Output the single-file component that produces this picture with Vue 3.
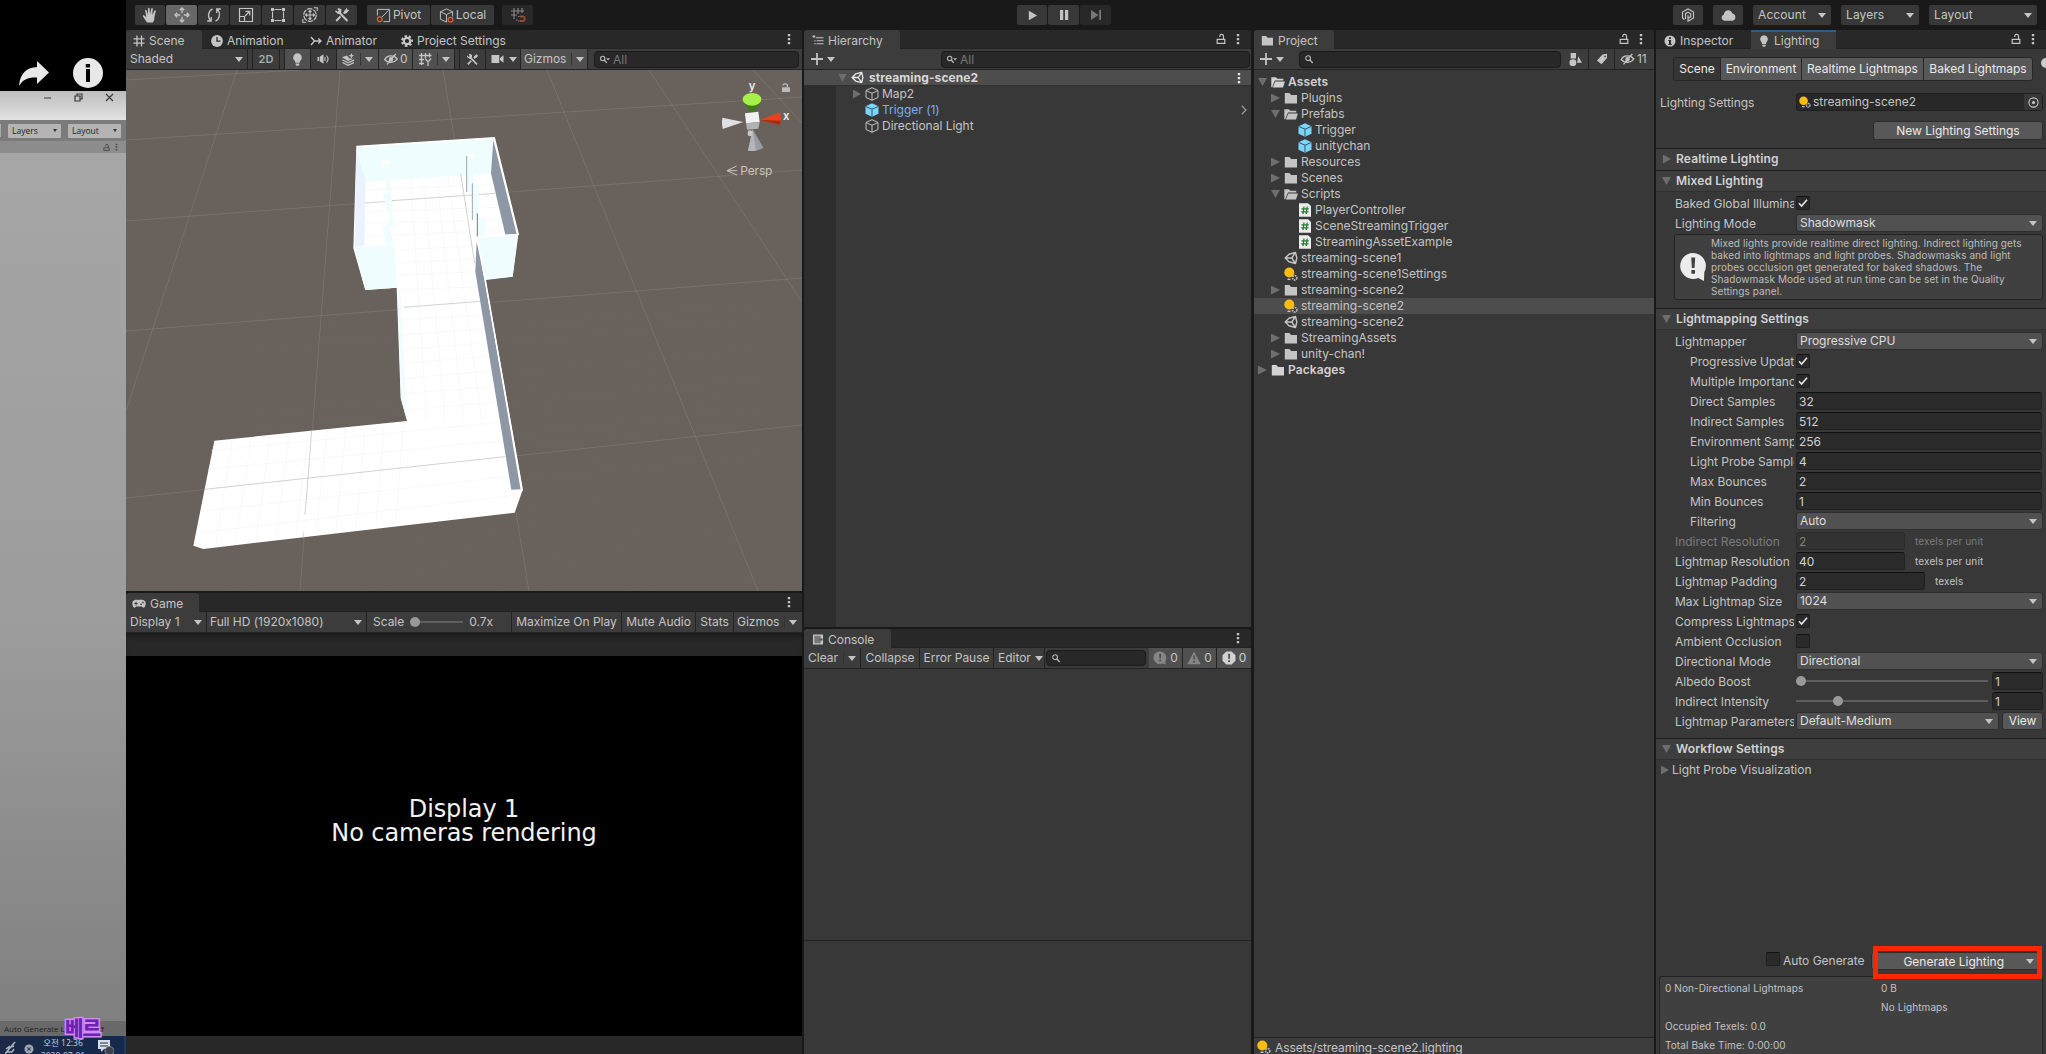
<script setup>
const tools = ['hand', 'move', 'rotate', 'scale', 'rect', 'transform', 'tools']

const sceneTabs = [
  { label: 'Scene', icon: 'hash', active: true, w: 76, pad: 7 },
  { label: 'Animation', icon: 'clock', w: 100, pad: 9 },
  { label: 'Animator', icon: 'animator', w: 89, pad: 8 },
  { label: 'Project Settings', icon: 'gear', w: 120, pad: 10 },
]

const tree = [
  { d: 0, fold: 'open', icon: 'folder-open', t: 'Assets', bold: true },
  { d: 1, fold: 'closed', icon: 'folder', t: 'Plugins' },
  { d: 1, fold: 'open', icon: 'folder-open', t: 'Prefabs' },
  { d: 2, icon: 'prefab', t: 'Trigger' },
  { d: 2, icon: 'prefab', t: 'unitychan' },
  { d: 1, fold: 'closed', icon: 'folder', t: 'Resources' },
  { d: 1, fold: 'closed', icon: 'folder', t: 'Scenes' },
  { d: 1, fold: 'open', icon: 'folder-open', t: 'Scripts' },
  { d: 2, icon: 'script', t: 'PlayerController' },
  { d: 2, icon: 'script', t: 'SceneStreamingTrigger' },
  { d: 2, icon: 'script', t: 'StreamingAssetExample' },
  { d: 1, icon: 'unity', t: 'streaming-scene1' },
  { d: 1, icon: 'lightset', t: 'streaming-scene1Settings' },
  { d: 1, fold: 'closed', icon: 'folder', t: 'streaming-scene2' },
  { d: 1, icon: 'lightset', t: 'streaming-scene2', sel: true },
  { d: 1, icon: 'unity', t: 'streaming-scene2' },
  { d: 1, fold: 'closed', icon: 'folder', t: 'StreamingAssets' },
  { d: 1, fold: 'closed', icon: 'folder', t: 'unity-chan!' },
  { d: 0, fold: 'closed', icon: 'folder', t: 'Packages', bold: true },
]

const mapping = [
  { l: 'Lightmapper', k: 'drop', v: 'Progressive CPU' },
  { l: 'Progressive Updates', k: 'check', v: true, sub: true },
  { l: 'Multiple Importance', k: 'check', v: true, sub: true },
  { l: 'Direct Samples', k: 'field', v: '32', sub: true },
  { l: 'Indirect Samples', k: 'field', v: '512', sub: true },
  { l: 'Environment Samples', k: 'field', v: '256', sub: true },
  { l: 'Light Probe Sample', k: 'field', v: '4', sub: true },
  { l: 'Max Bounces', k: 'field', v: '2', sub: true },
  { l: 'Min Bounces', k: 'field', v: '1', sub: true },
  { l: 'Filtering', k: 'drop', v: 'Auto', sub: true },
  { l: 'Indirect Resolution', k: 'field', v: '2', w: 109, unit: 'texels per unit', off: true },
  { l: 'Lightmap Resolution', k: 'field', v: '40', w: 109, unit: 'texels per unit' },
  { l: 'Lightmap Padding', k: 'field', v: '2', w: 129, unit: 'texels' },
  { l: 'Max Lightmap Size', k: 'drop', v: '1024' },
  { l: 'Compress Lightmaps', k: 'check', v: true },
  { l: 'Ambient Occlusion', k: 'check', v: false },
  { l: 'Directional Mode', k: 'drop', v: 'Directional' },
  { l: 'Albedo Boost', k: 'slider', v: '1', pos: 0 },
  { l: 'Indirect Intensity', k: 'slider', v: '1', pos: 36.5 },
  { l: 'Lightmap Parameters', k: 'param', v: 'Default-Medium' },
]
</script>

<template>
  <div class="screen">
    <svg class="defs" aria-hidden="true">
      <symbol id="i-hand" viewBox="0 0 16 16"><path fill="currentColor" d="M5.2 15.5C3.9 14 2 11.300.9 9.300.5 8.300 1.600 7.700 2.400 8.500L4.300 10.200 3.200 3.800c-.2-1.200 1.200-1.500 1.500-.4L6 8 6 1.600C6 .4 7.500.4 7.600 1.600L8 7.500 9.200 1.800c.3-1.100 1.700-.8 1.600.3L10.300 8 12.400 3.800c.5-1 1.700-.5 1.400.6-.7 2.800-1.200 4-1.400 6.500-.1 2-.6 3.200-1.600 4.600z"/></symbol>
      <symbol id="i-move" viewBox="0 0 16 16"><path fill="none" stroke="currentColor" stroke-width="1.300" d="M8 1v5.200M8 9.800V15M1 8h5.200M9.800 8H15M5.800 3.200 8 1l2.200 2.200M5.800 12.800 8 15l2.200-2.200M3.200 5.800 1 8l2.200 2.200M12.800 5.800 15 8l-2.200 2.200"/></symbol>
      <symbol id="i-rotate" viewBox="0 0 16 16"><path fill="none" stroke="currentColor" stroke-width="1.300" d="M6.500 1.800C2.500 3.600 1 9.500 4.600 13.800M1.200 14h4V10M9.500 14.200C13.500 12.400 15 6.500 11.400 2.200M14.800 2h-4v4"/></symbol>
      <symbol id="i-scale" viewBox="0 0 16 16"><path fill="none" stroke="currentColor" stroke-width="1.200" d="M1.500 1.500h13v13h-13zM1.500 9.500h5v5M7 9l4.500-4.500M7.500 4.300h4.200v4.200"/></symbol>
      <symbol id="i-rect" viewBox="0 0 16 16"><path fill="none" stroke="currentColor" stroke-width="1.100" d="M4.500 2.500h7M4.500 13.500h7M2.500 4.500v7M13.500 4.500v7"/><path fill="currentColor" d="M1 1h3v3H1zM12 1h3v3h-3zM1 12h3v3H1zM12 12h3v3h-3z"/></symbol>
      <symbol id="i-transform" viewBox="0 0 16 16"><circle cx="8" cy="8" r="6.300" fill="none" stroke="currentColor" stroke-width="1.200" stroke-dasharray="5.500 1"/><path fill="none" stroke="currentColor" stroke-width="1.100" d="M8 3.500v9M3.500 8h9M6.500 5 8 3.500 9.500 5M6.500 11 8 12.500 9.500 11M5 6.500 3.500 8 5 9.500M11 6.500 12.500 8 11 9.500M12 .8h3.200V4M4 15.200H.8V12"/></symbol>
      <symbol id="i-tools" viewBox="0 0 16 16"><path fill="none" stroke="currentColor" stroke-width="2" d="M4.300 4.500 13.500 14M11.500 4.500 9.700 6.500M6.500 9.500 2.200 14"/><path fill="currentColor" d="M1 4.500 2 3.200l1.500 1.600 1.300-1.200L3.200 2 4.600 1l3 1.500L7 6.600 4 7zM10 4.200 13 .8l.3 2 2 .3-2.800 3.100-2.500.5z"/></symbol>
      <symbol id="i-pivot" viewBox="0 0 16 16"><path fill="none" stroke="#c4c4c4" stroke-width="1" d="M1.500 8V1.500h13v13H8M6.500 9.500l7-7"/><circle cx="4" cy="12" r="2.600" fill="none" stroke="#e0603a" stroke-width="1.300"/></symbol>
      <symbol id="i-local" viewBox="0 0 16 16"><path fill="none" stroke="#c4c4c4" stroke-width="1" d="M8 15 1.500 12V4L8 1l6.500 3v5M1.500 4 8 7l6.500-3M8 7v8"/><circle cx="12.300" cy="12.500" r="2.500" fill="none" stroke="#e0603a" stroke-width="1.300"/></symbol>
      <symbol id="i-snap" viewBox="0 0 16 16"><path fill="none" stroke="#858585" stroke-width="1.200" d="M4 1v11M8 1v6M12 1v5M1 4h13M1 8h6M6 13h1.500M8 9.500h1.500M8 14h1.500"/><path fill="none" stroke="#9c4a35" stroke-width="1.800" d="M10 9.500h2.500a2.200 2.200 0 0 1 0 4.500H10"/></symbol>
      <symbol id="i-hash" viewBox="0 0 12 12"><path fill="none" stroke="currentColor" stroke-width="1.300" d="M4 .5v11M8.500.5v11M.5 3.800h11M.5 8.200h11"/></symbol>
      <symbol id="i-clock" viewBox="0 0 12 12"><circle cx="6" cy="6" r="5.900" fill="currentColor"/><path fill="none" stroke="#282828" stroke-width="1.300" d="M6 2v4.200h3.500"/></symbol>
      <symbol id="i-animator" viewBox="0 0 12 12"><path fill="none" stroke="currentColor" stroke-width="1.400" d="M1 2 4.500 6 1 10M4.500 6H10.500M8.300 3.500 11 6 8.300 8.500"/></symbol>
      <symbol id="i-gear" viewBox="0 0 12 12"><path fill="none" stroke="currentColor" stroke-width="2.600" stroke-dasharray="2.300 1.850" d="M6 1.300a4.700 4.700 0 1 0 .01 0"/><circle cx="6" cy="6" r="3.200" fill="none" stroke="currentColor" stroke-width="2.200"/></symbol>
      <symbol id="i-bulb" viewBox="0 0 12 12"><path fill="currentColor" d="M6 .2a4 4 0 0 1 2.300 7.200L8 9H4l-.3-1.600A4 4 0 0 1 6 .2zM4.300 9.700h3.400v1L7 11.800H5l-.7-1z"/></symbol>
      <symbol id="i-speaker" viewBox="0 0 12 12"><path fill="currentColor" d="M0 4h1.500v4H0zM2.200 3.700 6 1.200v9.600L2.200 8.300z"/><path fill="none" stroke="currentColor" stroke-width="1.100" d="M7.500 4v4M9 2.500c1.800 2 1.800 5 0 7"/></symbol>
      <symbol id="i-fx" viewBox="0 0 12 12"><path fill="currentColor" d="M8.700 0l.7 1.800 2 .7-2 .8-.7 2-.8-2-2-.8 2-.7zM0 4l4.500-1.800L7 5l3.500.2L5.500 7.400z"/><path fill="none" stroke="currentColor" stroke-width="1.200" d="M.5 6.500l5 2.500 5.500-2.500M.5 8.800l5 2.500 5.500-2.500"/></symbol>
      <symbol id="i-eye" viewBox="0 0 14 12"><path fill="none" stroke="currentColor" stroke-width="1.300" d="M.7 6.500C3 2 10 1.500 13.300 6 10.500 10.200 4 10.500.7 6.500zM11.800.8 3 11.300"/><circle cx="7" cy="6.200" r="2.200" fill="currentColor"/></symbol>
      <symbol id="i-grid" viewBox="0 0 14 14"><path fill="none" stroke="currentColor" stroke-width="1.300" d="M3.500 1v12M7.500 1v5M11.500 1v4.500M1 3.500h12.500M1 7.500h5M1 11.500h5M7 6.500 10 10l3-3.500M10 10v4"/></symbol>
      <symbol id="i-camera" viewBox="0 0 12 12"><path fill="currentColor" d="M0 2h7.800v8H0zM8.500 5 12 2.200v7.600L8.500 7z"/></symbol>
      <symbol id="i-search" viewBox="0 0 12 12"><circle cx="4.500" cy="4.500" r="2.600" fill="none" stroke="currentColor" stroke-width="1.200"/><path stroke="currentColor" stroke-width="1.500" d="M6.500 6.500 9.500 9.800"/></symbol>
      <symbol id="i-search-drop" viewBox="0 0 12 12"><circle cx="4" cy="4.800" r="2.400" fill="none" stroke="currentColor" stroke-width="1.200"/><path stroke="currentColor" stroke-width="1.500" d="M5.700 6.500 8.500 9.700"/><path fill="currentColor" d="M7.800 4.700H12L9.900 7z"/></symbol>
      <symbol id="i-lock" viewBox="0 0 10 12"><path fill="none" stroke="currentColor" stroke-width="1.200" d="M1.200 6.300h7.600v4H1.200zM7.500 6V3.200a1.700 1.700 0 0 0-3.700 0v.8"/></symbol>
      <symbol id="i-kebab" viewBox="0 0 4 12"><path fill="currentColor" d="M.8 1h2.400v2.200H.8zM.8 5h2.400v2.200H.8zM.8 9h2.400v2.200H.8z"/></symbol>
      <symbol id="i-list" viewBox="0 0 12 12"><path stroke="currentColor" stroke-width="1.100" d="M3.500 3H12M4.500 6.200H12M4.500 9.500H12M0 1.500h3M1.500.2v3M2 6.200h1.500M2 9.500h1.500"/></symbol>
      <symbol id="i-plus" viewBox="0 0 12 12"><path stroke="currentColor" stroke-width="1.800" d="M6 0v12M0 6h12"/></symbol>
      <symbol id="i-unity" viewBox="0 0 14 14"><path fill="none" stroke="currentColor" stroke-width="1.400" stroke-linejoin="round" d="M1.200 7 5 3.200 11.500 1.500 12.800 7 11.500 12.500 5 10.800zM1.200 7H7.800M7.800 7l3.300-5M7.800 7l3.300 5"/></symbol>
      <symbol id="i-cube" viewBox="0 0 14 14"><path fill="none" stroke="currentColor" stroke-width="1" stroke-linejoin="round" d="M7 .7 13 3.500V10.500L7 13.300 1 10.500V3.500zM1 3.500 7 6.300l6-2.800M7 6.300v7"/></symbol>
      <symbol id="i-prefab" viewBox="0 0 14 14"><path fill="#7ed3fb" d="M7 .3 13.500 3.200V10.800L7 13.800.5 10.800V3.200z"/><path fill="none" stroke="#31546a" stroke-width="1" d="M.8 3.500 7 6.200l6.200-2.700M7 6.200v7.300"/></symbol>
      <symbol id="i-folder" viewBox="0 0 14 12"><path fill="currentColor" d="M.8 1h4.700L7 3h6v8.500H.8z"/></symbol>
      <symbol id="i-folder-open" viewBox="0 0 14 12"><path fill="currentColor" d="M.3 1.200h4.500l1.500 1.600h6v1.700H4L1.800 9.500l-.5 1.700H.3z"/><path fill="currentColor" d="M4.300 5.500h9.600L12 11.400H1.800z"/></symbol>
      <symbol id="i-lightset" viewBox="0 0 14 14"><circle cx="5.300" cy="5.500" r="5" fill="#fdbd10"/><path stroke="#c4c4c4" stroke-width="1.500" d="M3.500 12.300h3"/><circle cx="10.700" cy="10.800" r="2.200" fill="#383838" stroke="#bcbcbc" stroke-width="1.500" stroke-dasharray="1.700 .6"/></symbol>
      <symbol id="i-shapes" viewBox="0 0 12 12"><circle cx="3.600" cy="9" r="3.200" fill="currentColor"/><path fill="currentColor" d="M1.500 0h5v5h-5zM8.500 3l3.500 6H7.500z"/></symbol>
      <symbol id="i-tag" viewBox="0 0 12 12"><path fill="currentColor" fill-rule="evenodd" d="M1 7.500 6.500 1.500 11 .8 11 5 5.500 11.300zM8.300 2.700v1.500h1.500V2.700z"/></symbol>
      <symbol id="i-info" viewBox="0 0 12 12"><circle cx="6" cy="6" r="5.500" fill="currentColor"/><path fill="#282828" d="M5 2.200h2v1.700H5zM4.300 5H7v4h.8v1H4.300V9H5V6h-.7z"/></symbol>
      <symbol id="i-pad" viewBox="0 0 15 10"><path fill="currentColor" d="M4 .5h7a3.800 3.800 0 0 1 3.500 5c-.5 3.500-2.500 4.500-4 2.200H4.500C3 10 1 9 .5 5.500A3.800 3.800 0 0 1 4 .5z"/><path stroke="#3c3c3c" stroke-width="1.100" d="M2.500 4.500h3.600M4.300 2.700v3.600"/><path fill="#3c3c3c" d="M9 4.500h1.500V6H9zM11 2.700h1.500v1.500H11z"/></symbol>
      <symbol id="i-console" viewBox="0 0 12 12"><path fill="currentColor" d="M.5.5h11v11H.5z"/><path fill="#777" d="M2 2h7v8H2z"/><path fill="#555" d="M7.500 5H11v2H7.500z"/></symbol>
      <symbol id="i-bubble" viewBox="0 0 14 14"><path fill="currentColor" d="M7 .5a6.300 6.300 0 0 1 6.300 6.300c0 2-.5 3-1 3.700l.5 3-3.300-1A6.300 6.300 0 1 1 7 .5z"/><path fill="#454545" d="M6.200 3h1.900l-.3 4.500H6.500zM6.300 8.700H8v1.600H6.300z"/></symbol>
      <symbol id="i-warn" viewBox="0 0 14 14"><path fill="currentColor" d="M7 .5 13.700 13.200H.3z"/><path fill="#454545" d="M6.300 4.500h1.500l-.2 4.200H6.500zM6.300 10H7.800v1.500H6.300z"/></symbol>
      <symbol id="i-error" viewBox="0 0 14 14"><path fill="currentColor" d="M4.300.5h5.400l3.800 3.800v5.400l-3.800 3.800H4.300L.5 9.700V4.300z"/><path fill="#454545" d="M6.200 2.700h1.800l-.2 5.300H6.400zM6.200 9.300H8V11H6.200z"/></symbol>
      <symbol id="i-collab" viewBox="0 0 14 14"><path fill="none" stroke="currentColor" stroke-width="1.200" d="M3.500 11.500 1.500 10V4L7 1l5.500 3v6L7 13.200V11M4.500 11V5.700L7 4.300l2.700 1.500v3L7 10.300V7.300"/></symbol>
      <symbol id="i-cloud" viewBox="0 0 14 12"><path fill="currentColor" d="M3.300 11A3.100 3.100 0 0 1 2.700 5C3.300 0 9.500-.2 10.700 4.200A3.500 3.500 0 0 1 10.800 11z"/></symbol>
      <symbol id="i-check" viewBox="0 0 12 12"><path fill="none" stroke="#e6e6e6" stroke-width="1.600" d="M2 6.300 4.600 9 10 2.800"/></symbol>
      <symbol id="i-play" viewBox="0 0 12 12"><path fill="currentColor" d="M2 .8 11 6 2 11.200z"/></symbol>
      <symbol id="i-pause" viewBox="0 0 12 12"><path fill="currentColor" d="M2 1h3.200v10H2zM7 1h3.200v10H7z"/></symbol>
      <symbol id="i-step" viewBox="0 0 12 12"><path fill="currentColor" d="M1 1l7.500 5L1 11zM9.200 1H11v10H9.200z"/></symbol>
      <symbol id="i-script" viewBox="0 0 14 14"><path fill="#ececec" d="M1 .2h9L13 3v10.800H1z"/><path fill="none" stroke="#2c7a37" stroke-width="1.300" d="M6 3.500 5 11M9.200 3.500l-1 7.500M3.500 5.800h7.300M3.200 8.800h7.300"/></symbol>
    </svg>

    <aside class="recorder">
      <div class="rec-top">
        <svg width="30" height="25" viewBox="0 0 30 25"><path fill="#e8e8e8" d="M0 25C1 12 8 6.500 18 6V0l12 11.500L18 23v-6.500C10 16 4 18 0 25z"/></svg>
        <svg width="30" height="30" viewBox="0 0 30 30"><circle cx="15" cy="15" r="15" fill="#e8e8e8"/><path fill="#000" d="M12.800 6h4.200v3.500h-4.200zM13 11h4v13h-4z"/></svg>
      </div>
      <div class="rec-title">
        <svg width="100" height="10" viewBox="0 0 100 10"><path fill="none" stroke="#3a3a3a" stroke-width="1.200" d="M8 5h7M39 3h5v5h-5zM41 3V1h5v5h-2M70 1l7 7M77 1l-7 7"/></svg>
      </div>
      <div class="rec-bar"><i></i><span>Layers<b></b></span><span>Layout<b></b></span></div>
      <div class="rec-tab"><svg width="7" height="9"><use href="#i-lock" /></svg><svg width="3" height="8"><use href="#i-kebab" /></svg></div>
      <div class="rec-body"></div>
      <div class="rec-status">Auto Generate Lighting Off</div>
      <div class="rec-task">
        <svg width="30" height="14" viewBox="0 0 30 14"><path fill="none" stroke="#aab4c4" stroke-width="1.500" d="M0 14 10 2M3 8l6-2M2 12h5l2-3M1 9l4-3"/><circle cx="24" cy="9" r="4.500" fill="#a0a6b2"/><path stroke="#33405c" stroke-width="1.200" d="M22.300 7.300l3.400 3.400M25.700 7.300l-3.400 3.400"/></svg>
        <div class="when">오전 12:36<br>2020-07-01</div>
        <svg class="note" width="16" height="15" viewBox="0 0 16 15"><path fill="#d8dce4" d="M0 0h12v9H6l-3 3V9H0z"/><path stroke="#26334f" d="M2 3h8M2 6h8"/><circle cx="11.500" cy="11" r="4.500" fill="#3a4050" stroke="#888"/></svg>
      </div>
      <div class="sticker">베르</div>
    </aside>

    <div class="editor">
      <header class="topbar">
        <div class="group tools">
          <div v-for="(t, i) in tools" :key="t" class="tb" :class="{ on: i === 1 }"><svg width="16" height="16"><use :href="'#i-' + t" /></svg></div>
        </div>
        <div class="group pivots">
          <div class="tb pv"><svg width="15" height="15"><use href="#i-pivot" /></svg>Pivot</div>
          <div class="tb pv"><svg width="15" height="15"><use href="#i-local" /></svg>Local</div>
        </div>
        <div class="tb snap"><svg width="16" height="16"><use href="#i-snap" /></svg></div>
        <div class="group plays">
          <div class="tb"><svg width="11" height="11"><use href="#i-play" /></svg></div>
          <div class="tb"><svg width="12" height="12"><use href="#i-pause" /></svg></div>
          <div class="tb dim"><svg width="12" height="12"><use href="#i-step" /></svg></div>
        </div>
        <div class="right">
          <div class="tb sq"><svg width="14" height="14"><use href="#i-collab" /></svg></div>
          <div class="tb sq"><svg width="15" height="13"><use href="#i-cloud" /></svg></div>
          <div class="tb menu">Account<b class="dn"></b></div>
          <div class="tb menu">Layers<b class="dn"></b></div>
          <div class="tb menu wide">Layout<b class="dn"></b></div>
        </div>
      </header>

      <main class="docks">
        <div class="col c-scene">
          <section class="panel scene">
            <div class="tabs">
              <div v-for="t in sceneTabs" :key="t.label" class="tab" :class="{ active: t.active }" :style="{ width: t.w + 'px', paddingLeft: t.pad + 'px' }"><svg width="12" height="12"><use :href="'#i-' + t.icon" /></svg>{{ t.label }}</div>
              <span class="grow"></span><svg class="kb" width="4" height="12"><use href="#i-kebab" /></svg>
            </div>
            <div class="bar">
              <div class="cell" style="width: 122px; padding-left: 4px">Shaded<b class="dn end"></b></div>
              <div class="cell gap"></div>
              <div class="cell mid b2" style="width: 27px">2D</div>
              <div class="cell gap"></div>
              <div class="cell mid on" style="width: 26px"><svg width="13" height="13"><use href="#i-bulb" /></svg></div>
              <div class="cell mid" style="width: 26px"><svg width="13" height="12"><use href="#i-speaker" /></svg></div>
              <div class="cell on split" style="width: 42px"><svg width="13" height="13"><use href="#i-fx" /></svg><i></i><b class="dn"></b></div>
              <div class="cell on eye" style="width: 34px"><svg width="14" height="12"><use href="#i-eye" /></svg>0</div>
              <div class="cell on split" style="width: 42px"><svg width="14" height="14"><use href="#i-grid" /></svg><i></i><b class="dn"></b></div>
              <div class="cell gap"></div>
              <div class="cell mid" style="width: 26px"><svg width="13" height="13"><use href="#i-tools" /></svg></div>
              <div class="cell cam" style="width: 35px"><svg width="13" height="12"><use href="#i-camera" /></svg><b class="dn"></b></div>
              <div class="cell on giz" style="width: 67px">Gizmos<i></i><b class="dn"></b></div>
              <div class="search s-scene"><svg width="11" height="11"><use href="#i-search-drop" /></svg>All</div>
            </div>
            <svg class="view" viewBox="126 70 676 521" width="676" height="521">
              <rect x="126" y="70" width="676" height="521" fill="#69615b" />
              <g stroke="#a0a5a5" stroke-opacity=".03" fill="none">
                <path v-for="n in 24" :key="'h' + n" :d="`M126 ${330 + n * 16} L802 ${270 + n * 15}`" />
                <path v-for="n in 34" :key="'v' + n" :d="`M${110 + n * 20} 300 L${70 + n * 22} 591`" />
              </g>
              <g stroke="#a8acab" stroke-opacity=".22" fill="none">
                <path d="M126 80 300 70M126 140 802 97M126 221 802 170M126 331 802 278M126 498 802 425M237 70 126 411M340 70 300 591M443 70 529 591M547 70 758 591M649 70 802 302M753 70 802 123" />
              </g>
              <g transform="translate(180 120) scale(.33333)">
                <path fill="#fff" d="M529 79 943 53 1015 345 998 470 918 480 1028 1110 1004 1178 70 1287 40 1277 103 962 681 903 662 835 650 503 556 510 520 385z" />
                <g fill="none" stroke="#f5f5f5" stroke-width="2">
                  <path v-for="n in 10" :key="'c' + n" :d="`M${100 + n * 57} ${964 - n * 6} L${48 + n * 60} ${1280 - n * 7}`" />
                  <path d="M95 992 970 906M85 1048 985 960M65 1174 1000 1068M50 1240 1010 1125M675 870 960 846M672 820 950 800M670 775 945 752M670 730 935 708M668 688 930 667M668 645 925 625M665 600 920 585M660 510 900 500M655 465 890 455M655 430 888 415M655 390 885 378M555 350 970 330M555 310 960 300M555 275 950 262M555 210 940 194M692 180 740 900M730 178 795 895M770 175 850 900M805 170 905 900" />
                </g>
                <path fill="#effdff" d="M531 82 940 57 935 160 555 186z" />
                <path fill="#eaf3ff" d="M529 84 557 186 553 378 524 380z" />
                <path fill="#effdff" d="M522 383 645 374 650 503 556 510z" />
                <path fill="#effdff" d="M893 353 1013 345 998 470 914 478z" />
                <path fill="none" stroke="#c9c9c9" stroke-width="2.500" d="M554 249 640 243M636 242 945 220M670 562 900 544M75 1108 975 1010M395 932 384 1076 375 1184M371 1237v16M842 160 884 430" />
                <path fill="#8e97a6" d="M940 60 1010 342 976 344 933 160z" />
                <path fill="#8e97a6" d="M890 365 914 480 1022 1109 994 1110 886 455z" />
                <path fill="#effdff" d="M612 130 628 134 641 320 630 318zM608 220 622 218 644 320 637 322zM609 318 630 314 640 374 618 374zM652 510 662 510 680 898 663 835zM862 112 880 108 882 216 860 216zM880 196 898 196 892 300 876 298zM893 294 917 292 915 350 892 352z" />
                <path fill="#fff" d="M603 122h24v11h-24zM862 103h20v10h-20z" />
                <path fill="none" stroke="#9ca5b0" stroke-width="3" d="M860 108v108M877 190v110" /><path stroke="#6f7784" stroke-width="3" d="M892 280v70" />
                <path fill="none" stroke="#fff" stroke-width="4" d="M529 79 943 53 1015 343 890 352M893 355 1027 1110 994 1111" />
              </g>
              <g transform="translate(380 0) scale(.33333)">
                <path fill="#3f7a1f" d="M1090 305 1143 305 1117 345z" /><ellipse cx="1116" cy="298" rx="28" ry="19" fill="#a5f048" />
                <path fill="#f1f1f1" d="M1095 340 1135 335 1139 366 1098 370z" /><path fill="#b2b2b2" d="M1098 370 1139 366 1135 386 1101 389z" />
                <path fill="#dfe0e3" d="M1027 353 1090 366 1028 387q-4-17-1-34z" />
                <path fill="#e8401c" d="M1141 360 1199 337q8 19 0 37z" /><path fill="#a92a12" d="M1141 360 1202 362q0 7-3 12z" />
                <path fill="#9b9ba3" d="M1118 388 1150 443q-20 12-46 9z" /><path fill="#b4b4bb" d="M1118 388 1128 452q-14 2-24 0z" /><ellipse cx="1110" cy="400" rx="7" ry="9" fill="#c9c9c9" />
                <path fill="none" stroke="#c7c4c1" stroke-width="3" d="M1070 498 1041 512 1071 525M1041 512h30" />
                <path fill="none" stroke="#bbb" stroke-width="4" d="M1222 262v-8q-8-6-14 2" /><path fill="#bbb" d="M1206 262h24v14h-24z" />
                <text x="1106" y="269" class="ax">y</text><text x="1209" y="361" class="ax">x</text>
                <text x="1081" y="524" class="persp">Persp</text>
              </g>
            </svg>
          </section>
          <section class="panel game">
            <div class="tabs">
              <div class="tab active" style="width: 73px; padding-left: 6px"><svg width="14" height="10"><use href="#i-pad" /></svg>Game</div>
              <span class="grow"></span><svg class="kb" width="4" height="12"><use href="#i-kebab" /></svg>
            </div>
            <div class="bar">
              <div class="cell" style="width: 81px; padding-left: 4px">Display 1<b class="dn end"></b></div>
              <div class="cell" style="width: 160px; padding-left: 3px">Full HD (1920x1080)<b class="dn end"></b></div>
              <div class="cell sc" style="width: 145px">Scale<span class="trk"><em></em></span>0.7x</div>
              <div class="cell mid" style="width: 110px">Maximize On Play</div>
              <div class="cell mid" style="width: 74px">Mute Audio</div>
              <div class="cell mid" style="width: 38px">Stats</div>
              <div class="cell giz" style="width: 68px; border: 0">Gizmos<i></i><b class="dn"></b></div>
            </div>
            <div class="letter"></div>
            <div class="black"><div>Display 1</div><div>No cameras rendering</div></div>
            <div class="foot"></div>
          </section>
        </div>

        <div class="col c-hier">
          <section class="panel hier">
            <div class="tabs">
              <div class="tab active" style="width: 96px; padding-left: 8px"><svg width="12" height="11"><use href="#i-list" /></svg>Hierarchy</div>
              <span class="grow"></span><svg class="lk" width="10" height="12"><use href="#i-lock" /></svg><svg class="kb" width="4" height="12"><use href="#i-kebab" /></svg>
            </div>
            <div class="bar">
              <div class="add"><svg width="12" height="12"><use href="#i-plus" /></svg><b class="dn"></b></div>
              <div class="search s-hier"><svg width="11" height="11"><use href="#i-search-drop" /></svg>All</div>
            </div>
            <div class="hrow root"><b class="tri open"></b><svg width="13" height="13"><use href="#i-unity" /></svg><strong>streaming-scene2</strong><span class="grow"></span><svg class="kb" width="4" height="12"><use href="#i-kebab" /></svg></div>
            <div class="hbody">
              <div class="gutter"></div>
              <div class="hlist">
                <div class="hrow"><b class="tri"></b><svg width="14" height="14"><use href="#i-cube" /></svg>Map2</div>
                <div class="hrow pf"><b class="tri none"></b><svg width="14" height="14"><use href="#i-prefab" /></svg>Trigger (1)<span class="grow"></span><svg class="chev" width="6" height="10" viewBox="0 0 6 10"><path fill="none" stroke="#9a9a9a" stroke-width="1.300" d="M.8.8 5 5 .8 9.200"/></svg></div>
                <div class="hrow"><b class="tri none"></b><svg width="14" height="14"><use href="#i-cube" /></svg>Directional Light</div>
              </div>
            </div>
          </section>
          <section class="panel console">
            <div class="tabs">
              <div class="tab active" style="width: 87px; padding-left: 8px"><svg width="12" height="11"><use href="#i-console" /></svg>Console</div>
              <span class="grow"></span><svg class="kb" width="4" height="12"><use href="#i-kebab" /></svg>
            </div>
            <div class="bar">
              <div class="cell giz clr" style="width: 57px">Clear<i></i><b class="dn"></b></div>
              <div class="cell mid" style="width: 59px">Collapse</div>
              <div class="cell mid" style="width: 74px">Error Pause</div>
              <div class="cell ed" style="width: 51px">Editor<b class="dn"></b></div>
              <div class="search s-con"><svg width="11" height="11"><use href="#i-search" /></svg></div>
              <div class="cell on cnt mute"><svg width="14" height="14"><use href="#i-bubble" /></svg>0</div>
              <div class="cell on cnt mute"><svg width="14" height="14"><use href="#i-warn" /></svg>0</div>
              <div class="cell on cnt last"><svg width="14" height="14"><use href="#i-error" /></svg>0</div>
            </div>
            <div class="log"></div>
            <div class="detail"></div>
          </section>
        </div>

        <section class="panel c-proj">
          <div class="tabs">
            <div class="tab active" style="width: 80px; padding-left: 7px"><svg width="13" height="11"><use href="#i-folder" /></svg>Project</div>
            <span class="grow"></span><svg class="lk" width="10" height="12"><use href="#i-lock" /></svg><svg class="kb" width="4" height="12"><use href="#i-kebab" /></svg>
          </div>
          <div class="bar">
            <div class="add pj"><svg width="12" height="12"><use href="#i-plus" /></svg><b class="dn"></b></div>
            <div class="search s-proj"><svg width="11" height="11"><use href="#i-search" /></svg></div>
            <div class="cell mid" style="width: 26px; margin-left: 2px"><svg width="13" height="13"><use href="#i-shapes" /></svg></div>
            <div class="cell mid" style="width: 26px"><svg width="12" height="12"><use href="#i-tag" /></svg></div>
            <div class="cell eye" style="width: 39px; border: 0"><svg width="15" height="12"><use href="#i-eye" /></svg>11</div>
          </div>
          <div class="tree">
            <div v-for="(r, i) in tree" :key="i" class="trow" :class="['d' + r.d, { sel: r.sel, bold: r.bold }]"><b class="tri" :class="r.fold || 'none'"></b><svg :width="14" :height="r.icon.startsWith('folder') ? 12 : 14"><use :href="'#i-' + r.icon" /></svg>{{ r.t }}</div>
          </div>
          <div class="path"><svg width="14" height="14"><use href="#i-lightset" /></svg>Assets/streaming-scene2.lighting</div>
        </section>

        <section class="panel c-light">
          <div class="tabs">
            <div class="tab" style="width: 95px; padding-left: 8px"><svg width="12" height="12"><use href="#i-info" /></svg>Inspector</div>
            <div class="tab active hot" style="width: 85px; padding-left: 7px"><svg width="12" height="12"><use href="#i-bulb" /></svg>Lighting</div>
            <span class="grow"></span><svg class="lk" width="10" height="12"><use href="#i-lock" /></svg><svg class="kb" width="4" height="12"><use href="#i-kebab" /></svg>
          </div>
          <div class="modes">
            <div class="seg">
              <span class="cur" style="width: 47px">Scene</span><span style="width: 81px">Environment</span><span style="width: 122px">Realtime Lightmaps</span><span style="width: 109px">Baked Lightmaps</span>
            </div>
            <div class="cut"></div>
          </div>
          <div class="asset">
            <label>Lighting Settings</label>
            <div class="obj"><svg width="12" height="12"><use href="#i-lightset" /></svg>streaming-scene2<span class="grow"></span><i class="pick"><svg width="11" height="11" viewBox="0 0 11 11"><circle cx="5.500" cy="5.500" r="4.600" fill="none" stroke="#c4c4c4" stroke-width="1.100"/><circle cx="5.500" cy="5.500" r="1.600" fill="#c4c4c4"/></svg></i></div>
          </div>
          <div class="btn new">New Lighting Settings</div>

          <div class="head h1"><b class="tri"></b>Realtime Lighting</div>
          <div class="head"><b class="tri open"></b>Mixed Lighting</div>
          <div class="mixed">
            <div class="prop"><label>Baked Global Illumination</label><div class="cb"><svg width="12" height="12"><use href="#i-check" /></svg></div></div>
            <div class="prop"><label>Lighting Mode</label><div class="drop">Shadowmask<b class="dn"></b></div></div>
            <div class="help">
              <svg width="26" height="28" viewBox="0 0 26 28"><path fill="#ececec" d="M13 0a13 13 0 0 1 11.300 19.300L24 28l-5.800-3A13 13 0 1 1 13 0z"/><path fill="#404040" d="M11.200 4.500h4l-.7 10.500h-2.600zM11.400 17h3.600v3.700h-3.600z"/></svg>
              <p>Mixed lights provide realtime direct lighting. Indirect lighting gets<br>baked into lightmaps and light probes. Shadowmasks and light<br>probes occlusion get generated for baked shadows. The<br>Shadowmask Mode used at run time can be set in the Quality<br>Settings panel.</p>
            </div>
          </div>
          <div class="head"><b class="tri open"></b>Lightmapping Settings</div>
          <div class="mapping">
            <div v-for="p in mapping" :key="p.l" class="prop" :class="{ sub: p.sub, off: p.off }">
              <label>{{ p.l }}</label>
              <div v-if="p.k === 'drop'" class="drop">{{ p.v }}<b class="dn"></b></div>
              <div v-else-if="p.k === 'check'" class="cb"><svg v-if="p.v" width="12" height="12"><use href="#i-check" /></svg></div>
              <template v-else-if="p.k === 'field'"><div class="fld" :style="{ width: (p.w || 246) + 'px' }">{{ p.v }}</div><span v-if="p.unit" class="unit">{{ p.unit }}</span></template>
              <template v-else-if="p.k === 'slider'"><div class="sl"><em :style="{ marginLeft: p.pos + 'px' }"></em></div><div class="fld sm">{{ p.v }}</div></template>
              <template v-else><div class="drop pm">{{ p.v }}<b class="dn"></b></div><div class="btn vw">View</div></template>
            </div>
          </div>
          <div class="head"><b class="tri open"></b>Workflow Settings</div>
          <div class="lpv"><b class="tri"></b>Light Probe Visualization</div>
          <span class="grow"></span>
          <div class="gen">
            <div class="cb"></div><span class="auto">Auto Generate</span>
            <div class="btn go">Generate Lighting<b class="dn"></b><div class="mark"></div></div>
          </div>
          <div class="stats">
            <div><span>0 Non-Directional Lightmaps</span><span>0 B</span></div>
            <div><span></span><span>No Lightmaps</span></div>
            <div><span>Occupied Texels: 0.0</span></div>
            <div><span>Total Bake Time: 0:00:00</span></div>
          </div>
        </section>
      </main>
    </div>
  </div>
</template>

<style>
body { background: #191919; overflow: hidden; }
</style>

<style scoped>
* { box-sizing: border-box; }
.screen { display: flex; width: 2046px; height: 1054px; overflow: hidden; background: #191919; color: #c4c4c4; font: 12px/16px Inter, "Noto Sans CJK KR", sans-serif; letter-spacing: -.02px; white-space: nowrap; }
.defs { position: absolute; width: 0; height: 0; }
svg { flex: none; display: block; }
.grow { flex: 1; }
.dn { flex: none; width: 0; height: 0; border: 4px solid transparent; border-top: 5px solid #c4c4c4; border-bottom: 0; }
.tri { flex: none; width: 8px; height: 9px; background: #6e6e6e; clip-path: polygon(0 0, 100% 50%, 0 100%); }
.tri.open { width: 9px; height: 8px; clip-path: polygon(0 0, 100% 0, 50% 100%); }
.tri.none { visibility: hidden; }

.recorder { position: relative; width: 126px; display: flex; flex-direction: column; font-family: "Open Sans", "Noto Sans CJK KR", sans-serif; color: #222; letter-spacing: 0; }
.rec-top { height: 91px; background: #000; display: flex; padding: 58px 0 0 19px; gap: 24px; }
.rec-top svg:first-child { margin-top: 3px; }
.rec-title { height: 29px; background: linear-gradient(#bdbdbd, #e2e2e2); padding: 2px 0 0 36px; }
.rec-bar { height: 21px; background: #7b7b7b; display: flex; align-items: center; gap: 7px; font: 8.500px/13px "Open Sans", sans-serif; }
.rec-bar i { width: 1px; height: 13px; background: #aaa; }
.rec-bar span { width: 53px; height: 14px; background: #b4b4b4; border-radius: 1px; padding: 0 4px; display: flex; justify-content: space-between; align-items: center; }
.rec-bar b { border: 2.500px solid transparent; border-top: 3.500px solid #333; border-bottom: 0; }
.rec-tab { height: 12px; background: #8d8d8d; display: flex; justify-content: flex-end; align-items: center; gap: 5px; padding-right: 8px; color: #444; }
.rec-body { flex: 1; background: linear-gradient(#a6a6a6, #9c9c9c 55%, #808080); }
.rec-status { height: 15px; background: #696969; padding-left: 4px; font-size: 8px; line-height: 16px; }
.rec-task { height: 18px; background: linear-gradient(90deg, #1c2946, #14294f); border-right: 2px solid #243a60; display: flex; align-items: flex-start; padding-left: 5px; overflow: hidden; color: #c9cfda; }
.rec-task svg { margin-top: 4px; }
.when { width: 56px; text-align: center; font-size: 8.500px; line-height: 13px; }
.rec-task .note { margin-left: 7px; }
.sticker { position: absolute; left: 65px; top: 1014px; font: 900 20px/27px "Noto Sans CJK KR", sans-serif; color: #6a22b8; -webkit-text-stroke: 3px #d48af0; paint-order: stroke fill; letter-spacing: -1px; }

.editor { flex: 1; display: flex; flex-direction: column; min-width: 0; }
.topbar { height: 30px; display: flex; align-items: flex-start; padding: 5px 9px 0 9px; }
.group { display: flex; gap: 1px; }
.tb { height: 20px; width: 31px; background: #383838; border-radius: 2px; display: flex; align-items: center; justify-content: center; }
.tb.on { background: #676767; }
.tb.pv { width: 63px; gap: 2px; }
.tools .tb:first-child, .plays .tb:first-child { width: 30px; }
.pivots { margin-left: 10px; }
.snap { margin-left: 8px; background: #282828; }
.plays { margin-left: 484px; }
.tb.dim { background: #282828; color: #777; }
.right { display: flex; gap: 10px; margin-left: auto; }
.tb.sq { width: 30px; }
.tb.menu { width: 78px; justify-content: space-between; padding: 0 5px; letter-spacing: .1px; }
.tb.wide { width: 108px; }

.docks { flex: 1; display: flex; min-height: 0; }
.col { display: flex; flex-direction: column; gap: 2px; }
.panel { display: flex; flex-direction: column; background: #383838; overflow: hidden; border-radius: 3px 3px 0 0; }
.c-scene { width: 676px; margin-right: 2px; }
.scene { height: 561px; }
.game { flex: 1; }
.c-hier { width: 447px; margin-right: 3px; }
.hier { height: 597px; }
.console { flex: 1; }
.c-proj { width: 400px; margin-right: 2px; }
.c-light { width: 390px; }

.tabs { flex: none; height: 19px; display: flex; background: #282828; border-bottom: 1px solid #232323; }
.tab { height: 19px; display: flex; align-items: center; gap: 4px; padding-top: 2px; }
.tab.active { background: #3c3c3c; border-radius: 3px 3px 0 0; }
.tab.hot { border-top: 2px solid #2c5d87; padding-top: 0; border-radius: 0; }
.tabs .kb { margin: 3px 11px 0 0; }
.tabs .lk { margin: 3px 10px 0 0; }
.bar { flex: none; height: 21px; display: flex; background: #3c3c3c; border-bottom: 1px solid #232323; }
.cell { flex: none; display: flex; align-items: center; height: 20px; border-right: 1px solid #232323; }
.cell.mid { justify-content: center; }
.cell.on { background: #505050; }
.cell.gap { width: 5px; }
.b2 { font-weight: 600; font-size: 11px; color: #aaa; }
.end { margin-left: auto; margin-right: 4px; }
.split { padding-left: 5px; }
.split i, .giz i { width: 1px; height: 12px; background: #333; margin: 0 4px 0 5px; }
.cell.eye { padding-left: 5px; gap: 2px; }
.cam { padding-left: 5px; gap: 5px; }
.giz { padding-left: 3px; }
.giz.clr { padding-left: 4px; }
.search { height: 17px; margin-top: 2px; background: #282828; border: 1px solid #1b1b1b; border-radius: 4px; display: flex; align-items: center; gap: 4px; padding-left: 4px; color: #777; }
.search svg { color: #b8b8b8; }
.s-scene { width: 205px; margin-left: 6px; gap: 3px; }
.view { flex: none; }
.ax { font: 600 34px Inter, sans-serif; fill: #eee; }
.persp { font: 36px Inter, sans-serif; fill: #c7c4c1; letter-spacing: -.5px; }
.sc { padding-left: 6px; }
.trk { width: 53px; height: 2px; background: #606060; margin: 0 6px 0 6px; position: relative; }
.trk em { position: absolute; left: 0; top: -4px; width: 10px; height: 10px; border-radius: 50%; background: #999; }
.letter { height: 23px; background: #282828; box-shadow: inset 0 6px 7px -5px #111; }
.black { height: 380px; background: #000; display: flex; flex-direction: column; align-items: center; justify-content: flex-start; padding-top: 141px; font: 24px/24px "DejaVu Sans", sans-serif; color: #f2f2f2; letter-spacing: -.1px; }
.foot { flex: 1; background: #282828; }

.add { display: flex; align-items: center; gap: 4px; width: 137px; padding-left: 7px; }
.add.pj { width: 45px; padding-left: 6px; }
.s-hier { width: 309px; gap: 3px; }
.hrow { height: 16px; display: flex; align-items: center; gap: 4px; }
.hlist .hrow { gap: 3px; }
.hlist .tri { margin-right: 1px; }
.hrow.root { flex: none; background: #4d4d4d; border-bottom: 1px solid #303030; padding-left: 34px; color: #d8d8d8; letter-spacing: .08px; }
.root svg { color: #e8e8e8; margin-right: 1px; }
.root .kb { margin-right: 10px; }
.hbody { flex: 1; display: flex; }
.gutter { width: 32px; background: #2d2d2d; }
.hlist { flex: 1; padding-left: 17px; }
.hrow.pf { color: #7fadf0; }
.chev { margin-right: 4px; }
.ed { padding-left: 4px; gap: 4px; }
.s-con { width: 101px; margin: 2px 3px 0 1px; height: 16px; }
.cnt { width: 34px; justify-content: center; gap: 3px; }
.cnt.mute svg { color: #858585; }
.cnt.last { border-right: 0; color: #d0d0d0; }
.log { height: 272px; border-bottom: 1px solid #232323; }

.s-proj { width: 262px; }
.tree { padding-top: 4px; flex: 1; }
.trow { height: 16px; display: flex; align-items: center; gap: 3px; padding-left: 4px; }
.trow .tri { width: 9px; margin-right: 1px; }
.trow.d1 { padding-left: 17px; }
.trow.d2 { padding-left: 31px; }
.trow.sel { background: #4d4d4d; }
.trow.bold { font-weight: 600; color: #d2d2d2; letter-spacing: .1px; }
.path { height: 17px; border-top: 1px solid #232323; padding: 2px 0 0 3px; display: flex; gap: 4px; background: #3c3c3c; letter-spacing: -.1px; }

.c-light { border-radius: 3px 0 0 0; }
.modes { flex: none; height: 40px; display: flex; padding: 8px 0 0 17px; gap: 9px; }
.seg { display: flex; height: 24px; border: 1px solid #262626; border-radius: 3px; overflow: hidden; width: 360px; flex: none; }
.seg span { background: #585858; color: #eaeaea; line-height: 22px; text-align: center; border-right: 1px solid #262626; flex: none; }
.seg .cur { background: #353535; }
.cut { flex: none; width: 10px; height: 10px; margin: 1px 0 0 -1px; border-radius: 50%; background: #ccc; }
.asset { display: flex; padding: 4px 0 0 4px; height: 30px; }
.asset label { width: 136px; line-height: 19px; }
.obj { width: 247px; height: 18px; display: flex; align-items: center; background: #282828; border: 1px solid #1f1f1f; border-radius: 3px; padding-left: 2px; gap: 2px; }
.pick { background: #373737; width: 18px; height: 16px; display: flex; align-items: center; justify-content: center; }
.btn { background: #585858; border: 1px solid #2c2c2c; border-radius: 3px; color: #eaeaea; height: 19px; line-height: 17px; text-align: center; }
.new { width: 170px; margin: 2px 3px 0 auto; flex: none; }
.head { flex: none; height: 22px; border-top: 1px solid #1c1c1c; border-bottom: 1px solid #303030; background: #3e3e3e; display: flex; align-items: center; gap: 4px; padding: 0 0 0 7px; font-weight: 600; color: #d2d2d2; letter-spacing: .13px; }
.h1 { margin-top: 8px; border-bottom: 0; padding-bottom: 1px; }
.head .tri:not(.open) { margin-right: 1px; }
.head .tri.open { margin-left: -1px; margin-right: 1px; }
.mixed { flex: none; height: 116px; padding-top: 1px; }
.prop { display: flex; align-items: center; height: 20px; padding-left: 19px; }
.prop label { width: 119px; height: 17px; line-height: 18px; overflow: hidden; margin-right: 2px; flex: none; }
.prop.sub { padding-left: 34px; }
.prop.sub label { width: 104px; }
.cb { width: 14px; height: 14px; background: #2a2a2a; border: 1px solid #1f1f1f; border-top-color: #111; border-radius: 2px; }
.drop { width: 247px; height: 18px; line-height: 16px; background: #515151; border: 1px solid #2e2e2e; border-radius: 3px; display: flex; align-items: center; justify-content: space-between; padding: 0 5px 0 3px; color: #dedede; }
.fld { height: 18px; background: #2a2a2a; border: 1px solid #212121; border-top-color: #0f0f0f; border-radius: 3px; padding-left: 2px; line-height: 17px; color: #d0d0d0; }
.off { color: #7b7b7b; }
.off .fld { background: #323232; border-color: #2b2b2b; color: #808080; }
.unit { font-size: 10px; margin-left: 10px; letter-spacing: .13px; }
.help { margin: 1px 0 0 18px; width: 369px; height: 66px; border: 1px solid #232323; border-radius: 3px; background: #404040; display: flex; align-items: center; padding-left: 5px; gap: 5px; font-size: 10px; line-height: 12px; color: #bdbdbd; letter-spacing: .08px; }
.help p { margin: 0; }
.mapping { flex: none; padding-top: 1px; height: 408px; }
.sl { width: 192px; height: 2px; background: #5e5e5e; display: flex; align-items: center; margin-right: 4px; }
.sl em { width: 10px; height: 10px; border-radius: 50%; background: #999; }
.fld.sm { width: 51px; }
.drop.pm { width: 203px; }
.vw { width: 41px; height: 18px; line-height: 16px; margin-left: 3px; }
.lpv { display: flex; align-items: center; gap: 3px; padding: 2px 0 0 5px; }
.gen { height: 24px; display: flex; padding-left: 110px; gap: 3px; flex: none; line-height: 18px; }
.auto { width: 82px; }
.go { position: relative; width: 168px; margin-left: 3px; display: flex; align-items: center; justify-content: flex-end; gap: 22px; padding-right: 4px; height: 18px; }
.mark { position: absolute; left: 1px; top: -7px; width: 169px; height: 33px; border: 5px solid #ff2600; }
.stats { flex: none; width: 384px; height: 78px; margin-left: 3px; padding: 2px 0 0 5px; border: 1px solid #232323; border-bottom: 0; border-radius: 3px 3px 0 0; background: #404040; font-size: 10px; letter-spacing: .1px; }
.stats div { display: flex; height: 19px; line-height: 19px; }
.stats span:first-child { width: 216px; }
</style>
